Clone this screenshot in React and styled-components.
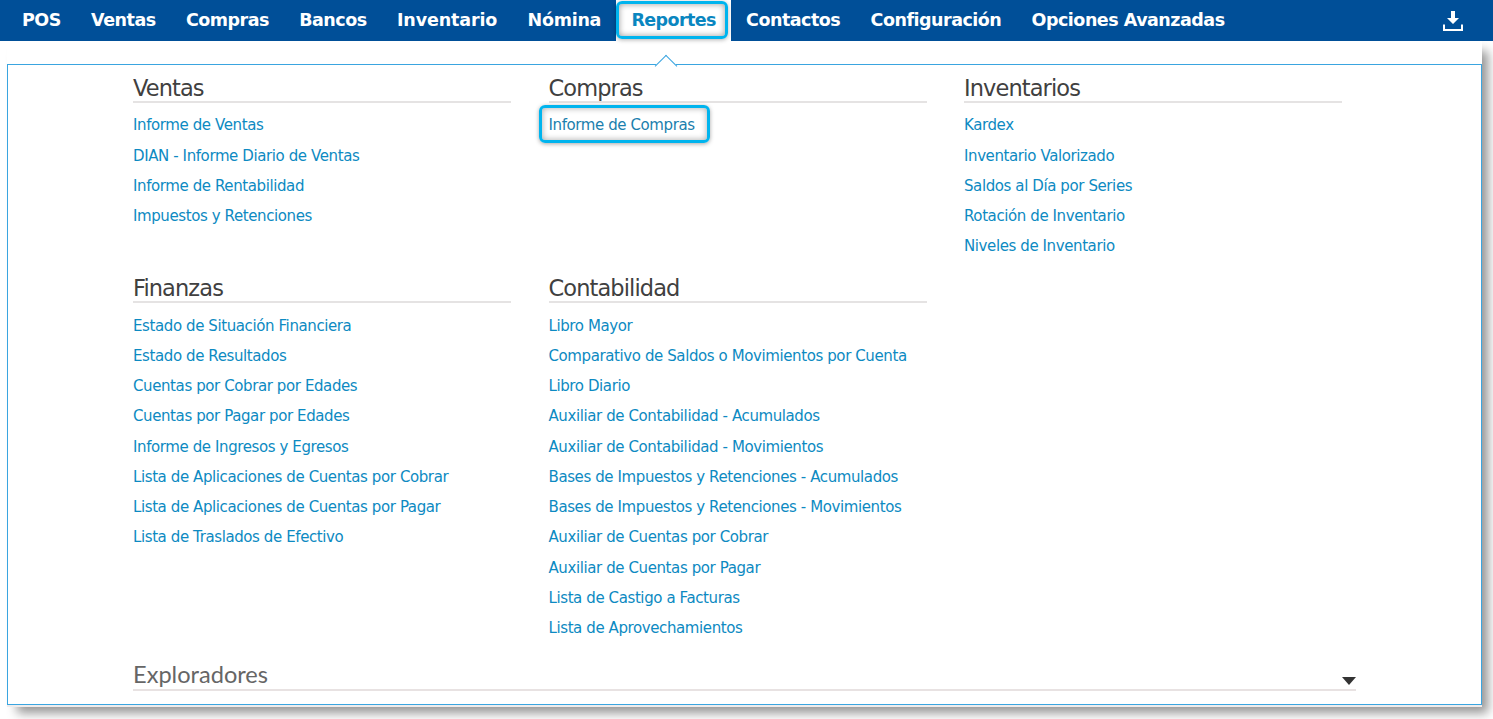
import React from 'react';
import styled, { createGlobalStyle } from 'styled-components';

const GlobalStyle = createGlobalStyle`
  html, body {
    margin: 0;
    padding: 0;
    background: #fff;
    font-family: "DejaVu Sans", "Liberation Sans", sans-serif;
  }
`;

const Page = styled.div`
  width: 1493px;
  height: 719px;
  overflow: hidden;
`;

const TopBar = styled.nav`
  position: relative;
  z-index: 2;
  display: flex;
  height: 41px;
  padding-left: 7px;
  background: #004f98;
`;

const NavItem = styled.a`
  display: flex;
  align-items: center;
  padding: 0 15.3px 2px 15px;
  font-size: 17.5px;
  font-weight: 700;
  letter-spacing: ${(p) => p.$tracking || -0.5}px;
  white-space: nowrap;
  color: ${(p) => (p.$active ? '#0a86c0' : '#fff')};
  background: ${(p) => (p.$active ? '#fff' : 'transparent')};
  position: relative;

  ${(p) =>
    p.$active &&
    `
    &::after {
      content: '';
      position: absolute;
      left: 0;
      right: 3px;
      top: 1px;
      bottom: 2px;
      border: 3px solid #00b4ee;
      border-radius: 6px;
      box-shadow: inset 0 0 6px rgba(0, 0, 0, 0.4), 0 1px 4px rgba(0, 0, 0, 0.3);
    }
  `}
`;

const DownloadButton = styled.button`
  display: flex;
  margin-left: auto;
  margin-right: 29px;
  padding: 0;
  align-self: center;
  border: none;
  background: none;
`;

const Dropdown = styled.div`
  position: relative;
  margin: 0 11px 0 7px;
  padding-top: 23px;
  background: #fff;
  border-bottom: 2px solid #efecec;
  box-shadow: 8px 8px 10px -2px rgba(0, 0, 0, 0.42);
`;

const Panel = styled.div`
  position: relative;
  height: 639px;
  padding: 0 125px;
  border: 1px solid #3aa5e0;

  &::before {
    content: '';
    position: absolute;
    top: -7px;
    left: 650px;
    width: 15px;
    height: 15px;
    background: #fff;
    border-top: 1px solid #3aa5e0;
    border-left: 1px solid #3aa5e0;
    transform: rotate(45deg);
  }
`;

const Columns = styled.div`
  display: grid;
  grid-template-columns: repeat(3, 378px);
  grid-template-rows: 200.25px 381px;
  column-gap: 37.5px;
`;

const Section = styled.section`
  padding-top: 9px;
`;

const SectionTitle = styled.h3`
  margin: 0;
  height: 27px;
  line-height: 29px;
  font-size: 22.5px;
  font-weight: 400;
  letter-spacing: -0.9px;
  color: #404040;
  border-bottom: 2px solid #e5e3e3;
`;

const LinkList = styled.ul`
  list-style: none;
  margin: 7.45px 0 0;
  padding: 0;
`;

const LinkRow = styled.li`
  height: 30.25px;
  line-height: 30.25px;
`;

const ReportLink = styled.a`
  position: relative;
  font-size: 15px;
  letter-spacing: -0.4px;
  color: #0d8ac2;
  white-space: nowrap;

  ${(p) =>
    p.$active &&
    `
    color: #1b7fae;
    &::after {
      content: '';
      position: absolute;
      left: -10px;
      right: -15px;
      top: -11px;
      bottom: -9px;
      border: 3px solid #00b4ee;
      border-radius: 6px;
      box-shadow: inset 0 0 6px rgba(0, 0, 0, 0.35), 0 1px 4px rgba(0, 0, 0, 0.35);
    }
  `}
`;

const CollapsedSection = styled.div`
  position: relative;
  margin-top: 12.5px;
`;

const CollapsedTitle = styled.h3`
  margin: 0;
  height: 30px;
  line-height: 31px;
  font-family: Lato, "Liberation Sans", sans-serif;
  font-size: 23.6px;
  font-weight: 400;
  color: #666;
  border-bottom: 2px solid #e8e2e2;
`;

const Caret = styled.span`
  position: absolute;
  right: 0;
  bottom: 6px;
  border-left: 7px solid transparent;
  border-right: 7px solid transparent;
  border-top: 8px solid #333;
`;

const menu = [
  { label: 'POS' },
  { label: 'Ventas' },
  { label: 'Compras' },
  { label: 'Bancos' },
  { label: 'Inventario', tracking: -0.12 },
  { label: 'Nómina', tracking: -0.27 },
  { label: 'Reportes', tracking: -0.6, active: true },
  { label: 'Contactos' },
  { label: 'Configuración' },
  { label: 'Opciones Avanzadas' },
];

const sections = [
  { title: 'Ventas', links: ['Informe de Ventas', 'DIAN - Informe Diario de Ventas', 'Informe de Rentabilidad', 'Impuestos y Retenciones'] },
  { title: 'Compras', links: ['Informe de Compras'] },
  { title: 'Inventarios', links: ['Kardex', 'Inventario Valorizado', 'Saldos al Día por Series', 'Rotación de Inventario', 'Niveles de Inventario'] },
  {
    title: 'Finanzas',
    links: [
      'Estado de Situación Financiera',
      'Estado de Resultados',
      'Cuentas por Cobrar por Edades',
      'Cuentas por Pagar por Edades',
      'Informe de Ingresos y Egresos',
      'Lista de Aplicaciones de Cuentas por Cobrar',
      'Lista de Aplicaciones de Cuentas por Pagar',
      'Lista de Traslados de Efectivo',
    ],
  },
  {
    title: 'Contabilidad',
    links: [
      'Libro Mayor',
      'Comparativo de Saldos o Movimientos por Cuenta',
      'Libro Diario',
      'Auxiliar de Contabilidad - Acumulados',
      'Auxiliar de Contabilidad - Movimientos',
      'Bases de Impuestos y Retenciones - Acumulados',
      'Bases de Impuestos y Retenciones - Movimientos',
      'Auxiliar de Cuentas por Cobrar',
      'Auxiliar de Cuentas por Pagar',
      'Lista de Castigo a Facturas',
      'Lista de Aprovechamientos',
    ],
  },
];

const DownloadIcon = () => (
  <svg width="22" height="22" viewBox="0 0 22 22" fill="none">
    <path d="M9 1h4v7h4l-6 6-6-6h4z" fill="#fff" />
    <path d="M2 14.5v5.5h18v-5.5" stroke="#fff" strokeWidth="2" />
  </svg>
);

const App = () => (
  <Page>
    <GlobalStyle />
    <TopBar>
      {menu.map((item) => (
        <NavItem key={item.label} $active={item.active} $tracking={item.tracking}>{item.label}</NavItem>
      ))}
      <DownloadButton><DownloadIcon /></DownloadButton>
    </TopBar>
    <Dropdown>
      <Panel>
        <Columns>
          {sections.map((section) => (
            <Section key={section.title}>
              <SectionTitle>{section.title}</SectionTitle>
              <LinkList>
                {section.links.map((link) => (
                  <LinkRow key={link}>
                    <ReportLink $active={link === 'Informe de Compras'}>{link}</ReportLink>
                  </LinkRow>
                ))}
              </LinkList>
            </Section>
          ))}
        </Columns>
        <CollapsedSection>
          <CollapsedTitle>Exploradores</CollapsedTitle>
          <Caret />
        </CollapsedSection>
      </Panel>
    </Dropdown>
  </Page>
);

export default App;
